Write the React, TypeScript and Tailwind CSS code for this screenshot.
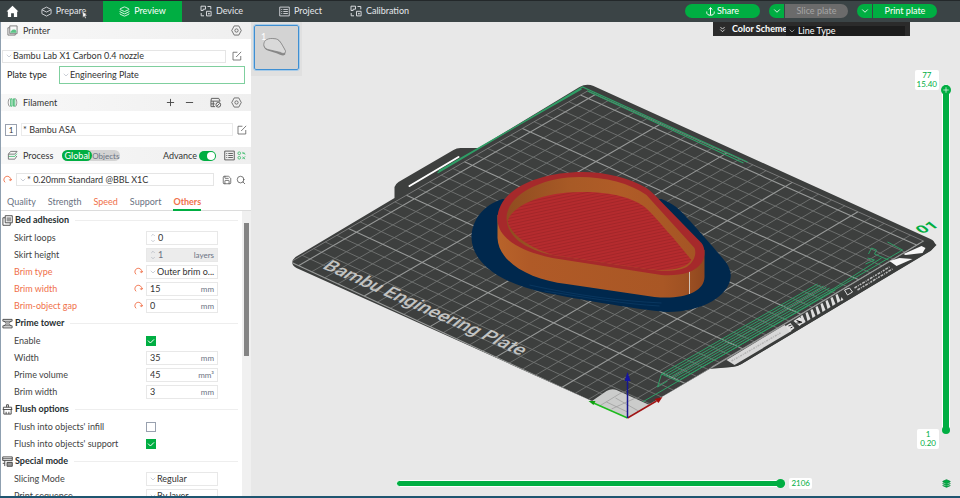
import { useState } from "react";
import type { ReactNode } from "react";
import { ChevronDown, ChevronUp, ChevronsDown, Layers, Minus, Plus, Save, Search } from "lucide-react";

interface Field {
  id: string;
  label: string;
  kind: "text" | "spin" | "select" | "check";
  value?: string;
  unit?: string;
  checked?: boolean;
  changed?: boolean;
  disabled?: boolean;
}

interface Section {
  title: string;
  icon: ReactNode;
  fields: Field[];
}

type Point = [number, number];

const adhesionIcon = (
  <svg viewBox="0 0 12 12" className="size-[11px]" fill="none" stroke="#444">
    <path d="M3.5 .8h7.7v7.7H3.5zM3.5 3H1v8.2h8V8.5" />
    <path d="M5 2.5h4.8v4.5H5z" fill="#999" stroke="none" />
  </svg>
);

const towerIcon = (
  <svg viewBox="0 0 12 12" className="size-[11px]" fill="none" stroke="#444">
    <path d="M1 1.5h10v2H1zM2.5 3.5 4.5 6l-2 2.5M9.5 3.5 7.5 6l2 2.5M1 8.5h10v2.3H1z" />
    <path d="M3.5 4h5L7 6l1.5 2h-5L5 6z" fill="#aaa" stroke="none" />
  </svg>
);

const flushIcon = (
  <svg viewBox="0 0 12 12" className="size-[11px]" fill="none" stroke="#444">
    <path d="M5 3.5V.8h2v2.7M1.5 6V3.5h9V6M.8 6h10.4M2 6v5h8V6M4.5 11V8.5M7.5 11V8.5" />
  </svg>
);

const modeIcon = (
  <svg viewBox="0 0 12 12" className="size-[11px]" fill="none" stroke="#444">
    <path d="M.8 1h10.4v4H.8zM.8 3h10.4M3 5v6M.8 8H3" />
    <path d="M5.5 7h5.7v4.2H5.5z" fill="#999" />
  </svg>
);

const sections: Section[] = [
  {
    title: "Bed adhesion",
    icon: adhesionIcon,
    fields: [
      { id: "skirt-loops", label: "Skirt loops", kind: "spin", value: "0" },
      { id: "skirt-height", label: "Skirt height", kind: "spin", value: "1", unit: "layers", disabled: true },
      { id: "brim-type", label: "Brim type", kind: "select", value: "Outer brim o...", changed: true },
      { id: "brim-width", label: "Brim width", kind: "text", value: "15", unit: "mm", changed: true },
      { id: "brim-gap", label: "Brim-object gap", kind: "text", value: "0", unit: "mm", changed: true },
    ],
  },
  {
    title: "Prime tower",
    icon: towerIcon,
    fields: [
      { id: "tower-enable", label: "Enable", kind: "check", checked: true },
      { id: "tower-width", label: "Width", kind: "text", value: "35", unit: "mm" },
      { id: "tower-volume", label: "Prime volume", kind: "text", value: "45", unit: "mm³" },
      { id: "tower-brim", label: "Brim width", kind: "text", value: "3", unit: "mm" },
    ],
  },
  {
    title: "Flush options",
    icon: flushIcon,
    fields: [
      { id: "flush-infill", label: "Flush into objects' infill", kind: "check", checked: false },
      { id: "flush-support", label: "Flush into objects' support", kind: "check", checked: true },
    ],
  },
  {
    title: "Special mode",
    icon: modeIcon,
    fields: [
      { id: "slicing-mode", label: "Slicing Mode", kind: "select", value: "Regular" },
      { id: "print-sequence", label: "Print sequence", kind: "select", value: "By layer" },
    ],
  },
];

function BoxIcon() {
  return (
    <svg viewBox="0 0 12 12" className="size-[11px]" fill="none" stroke="currentColor" strokeWidth=".9" strokeLinejoin="round">
      <path d="M6 1.2 11 3.8v4.6L6 11 1 8.4V3.8zM1.2 4.2 6 6.6l4.8-2.4" />
    </svg>
  );
}

function DeviceIcon() {
  return (
    <svg viewBox="0 0 12 12" className="size-[12px]" fill="none" stroke="currentColor" strokeWidth=".9">
      <path d="M1 5.5V1.2h4.5v3H3.2v1.3zM7.5 1.5h3.3v2.8M1.2 8v2.8H4M6.5 6.3h4.6v4.6H6.5zM8.5 8.3h.8v.8h-.8z" />
    </svg>
  );
}

function ProjectIcon() {
  return (
    <svg viewBox="0 0 12 12" className="size-[11px]" fill="none" stroke="currentColor" strokeWidth=".9">
      <path d="M.8 1.2h10.4v9.6H.8zM2.5 3.8h1M4.7 3.8h5M2.5 6h1M4.7 6h5M2.5 8.2h1M4.7 8.2h5" />
    </svg>
  );
}

function NutIcon() {
  return (
    <svg viewBox="0 0 12 12" className="size-[11px]" fill="none" stroke="#5c5c5c" strokeWidth=".9" strokeLinejoin="round">
      <path d="M3.5 1h5L11.2 6 8.5 11h-5L.8 6z" />
      <circle cx="6" cy="6" r="1.8" />
    </svg>
  );
}

function EditIcon() {
  return (
    <svg viewBox="0 0 12 12" className="size-[10px]" fill="none" stroke="#666">
      <path d="M6.5 1.5H1.2v9.3h9.3V6M5 7.2 11 1" />
    </svg>
  );
}

function ResetIcon() {
  return (
    <svg viewBox="0 0 12 12" className="size-[9px]" fill="none" stroke="#f0704a" strokeWidth="1.2">
      <path d="M2.8 9.8A4.6 4.6 0 1 1 10.3 7M11.8 5.2 10.2 7.6 7.8 6" />
    </svg>
  );
}

const tabs = [
  { name: "Prepare", icon: <BoxIcon /> },
  { name: "Preview", icon: <Layers className="size-[11px]" strokeWidth={1.8} /> },
  { name: "Device", icon: <DeviceIcon /> },
  { name: "Project", icon: <ProjectIcon /> },
  { name: "Calibration", icon: <DeviceIcon /> },
];

function TopBar() {
  const [active, setActive] = useState("Preview");
  return (
    <header className="relative z-10 flex h-[22px] shrink-0 items-stretch border-t border-[#23282a] bg-[#3b4446] text-white">
      <button aria-label="Home" className="flex w-6 items-center justify-center">
        <svg viewBox="0 0 14 14" className="size-[13px]" fill="currentColor">
          <path d="M7 .8 13.4 7H12v6H8.5V9h-3v4H2V7H.6z" />
        </svg>
      </button>
      <nav className="flex">
        {tabs.map((tab) => (
          <button
            key={tab.name}
            onClick={() => setActive(tab.name)}
            className={`flex w-[79px] items-center justify-center gap-1 pb-px ${tab.name === active ? "bg-[#00ae42]" : "text-gray-200"}`}
          >
            {tab.icon}
            {tab.name}
          </button>
        ))}
      </nav>
      <svg viewBox="0 0 8 12" className="absolute top-[9px] left-[82px] h-[10px] w-[6px]" fill="white" stroke="#333" strokeWidth=".6">
        <path d="M1 1v8.5l2-1.8 1.3 3 1.4-.6-1.3-3H7z" />
      </svg>
      <div className="ml-auto flex items-center gap-[9px] pr-[23px] pb-px">
        <button className="flex h-[14px] w-[75px] items-center justify-center gap-0.5 rounded-full bg-[#00ae42]">
          <svg viewBox="0 0 12 12" className="size-[9px]" fill="none" stroke="currentColor" strokeWidth="1.3">
            <path d="M6 10.500V1M3.400 3.400 6 1l2.600 2.400M1 6v1.500C1 9.500 3 11 6 11s5-1.500 5-3.500V6" />
          </svg>
          Share
        </button>
        <div className="flex h-[14px] gap-px">
          <button aria-label="Slice options" className="flex w-[15px] items-center justify-center rounded-l-full bg-[#00ae42]">
            <ChevronDown className="size-[10px]" />
          </button>
          <button disabled className="w-[63px] rounded-r-full bg-[#6b6b6b] text-[#a5a5a5]">Slice plate</button>
        </div>
        <div className="flex h-[14px] gap-px">
          <button aria-label="Print options" className="flex w-[15px] items-center justify-center rounded-l-full bg-[#00ae42]">
            <ChevronDown className="size-[10px]" />
          </button>
          <button className="w-16 rounded-r-full bg-[#00ae42]">Print plate</button>
        </div>
      </div>
    </header>
  );
}

function Combo({ id, label, value, className }: { id: string; label?: string; value: string; className: string }) {
  return (
    <div className={`flex items-center border bg-white pl-0.5 ${className}`}>
      <ChevronDown className="size-2 shrink-0 text-gray-400" strokeWidth={1.5} />
      <select id={id} aria-label={label} className="w-full min-w-0 appearance-none outline-none">
        <option>{value}</option>
      </select>
    </div>
  );
}

function FieldControl({ field }: { field: Field }) {
  if (field.kind === "check") {
    return (
      <span className="relative size-[10px]">
        <input
          id={field.id}
          type="checkbox"
          defaultChecked={field.checked}
          className="peer block size-[10px] appearance-none border border-gray-400 bg-white checked:border-[#00ae42] checked:bg-[#00ae42]"
        />
        <svg viewBox="0 0 10 10" className="pointer-events-none absolute inset-0 hidden size-[10px] peer-checked:block" fill="none" stroke="white">
          <path d="M2 4.6 4.4 7 8 3.4" />
        </svg>
      </span>
    );
  }
  if (field.kind === "select") {
    return <Combo id={field.id} value={field.value ?? ""} className="h-[14px] w-[72px] border-[#e8e8e8]" />;
  }
  return (
    <div className={`flex h-[14px] w-[72px] items-center border border-[#e8e8e8] px-[3px] ${field.disabled ? "bg-[#ececec] text-gray-500" : "bg-white"}`}>
      {field.kind === "spin" && (
        <span className="mr-0.5 flex flex-col text-gray-400">
          <ChevronUp className="size-[6px]" />
          <ChevronDown className="size-[6px]" />
        </span>
      )}
      <input id={field.id} defaultValue={field.value} disabled={field.disabled} className="w-0 min-w-0 flex-1 outline-none" />
      {field.unit && <span className="text-[8px] text-gray-500">{field.unit}</span>}
    </div>
  );
}

function PanelHeader({ icon, title, children }: { icon: ReactNode; title: string; children?: ReactNode }) {
  return (
    <div className="flex h-[17px] items-center bg-gradient-to-r from-[#f8f8f8] to-[#efefef] pr-[9px] pl-1.5">
      <span className="flex w-4 shrink-0">{icon}</span>
      <h2>{title}</h2>
      {children}
    </div>
  );
}

function Sidebar() {
  const [tab, setTab] = useState("Others");
  return (
    <aside className="flex w-[251px] shrink-0 flex-col border-l border-[#8fa0b0] bg-white text-[#333]">
      <PanelHeader
        title="Printer"
        icon={
          <svg viewBox="0 0 12 12" className="size-[11px]" fill="none" stroke="#777">
            <path d="M3 1h8v8.5H3zM3 3H1v8h8V9.5" />
            <path d="m4 8 2-2.5h3L10 8z" fill="#5cc487" stroke="#5cc487" />
          </svg>
        }
      >
        <button aria-label="Printer settings" className="ml-auto"><NutIcon /></button>
      </PanelHeader>

      <div className="mt-[10px] flex h-[14px] items-center gap-1.5 pr-[9px] pl-[1px]">
        <Combo id="printer" label="Printer" value="Bambu Lab X1 Carbon 0.4 nozzle" className="h-[13px] flex-1 border-[#e5e5e5]" />
        <button aria-label="Edit printer"><EditIcon /></button>
      </div>
      <div className="mt-[3px] flex items-center pr-1.5 pl-1.5">
        <label htmlFor="plate" className="w-[52px] text-[#222]">Plate type</label>
        <Combo id="plate" value="Engineering Plate" className="h-[18px] flex-1 border-[#7fcf9e]" />
      </div>

      <div className="mt-2.5">
        <PanelHeader
          title="Filament"
          icon={
            <svg viewBox="0 0 12 12" className="size-[11px]" fill="none" stroke="#888">
              <path d="M3 1.5C.8 3 .8 9 3 10.5M9 1.5c2.200 1.500 2.200 7.500 0 9" />
              <path d="M4 2h1.500v8H4zM7 2h1.500v8H7z" stroke="#3fba6e" />
            </svg>
          }
        >
          <div className="ml-auto flex items-center text-[#444]">
            <button aria-label="Add filament" className="mr-2"><Plus className="size-[11px]" /></button>
            <button aria-label="Remove filament" className="mr-[15px]"><Minus className="size-[11px]" /></button>
            <button aria-label="Sync filament" className="mr-[9px]">
              <svg viewBox="0 0 13 12" className="h-[11px] w-[12px]" fill="none" stroke="#555">
                <path d="M1.500 1.500h8l1.500 3H1zM1 4.500v6h4.500M3.500 4.500v6M1 7.500h4" />
                <circle cx="9" cy="8.500" r="2.600" />
                <path d="m7.500 10 3-3" />
              </svg>
            </button>
            <button aria-label="Filament settings"><NutIcon /></button>
          </div>
        </PanelHeader>
      </div>
      <div className="mt-3 flex items-center pr-1 pl-1">
        <span className="flex size-[12px] items-center justify-center border border-gray-400 text-[8px]">1</span>
        <input aria-label="Filament" defaultValue="* Bambu ASA" className="mr-1 ml-1 h-[13px] min-w-0 flex-1 border border-[#ebebeb] pl-[1px]" />
        <button aria-label="Edit filament"><EditIcon /></button>
      </div>

      <div className="mt-[11px]">
        <PanelHeader
          title="Process"
          icon={
            <svg viewBox="0 0 12 12" className="size-[11px]" fill="none" stroke="#666" strokeWidth=".9">
              <path d="M4 1.500h7L8.500 4.500h-7z" />
              <path d="M10.800 4 8.500 7h-7" stroke="#3fba6e" />
              <path d="M10.800 6.500 8.500 10h-7V4.500" />
            </svg>
          }
        >
          <div className="ml-[9px] flex h-[11px] items-center rounded-full bg-[#d3d3d3]">
            <button className="flex h-full w-[30px] items-center justify-center rounded-full bg-[#00ae42] text-white">Global</button>
            <button className="w-[28px] pr-px text-[8px] text-gray-500">Objects</button>
          </div>
          <label className="ml-auto flex items-center gap-[2px]">
            Advance
            <input
              type="checkbox"
              role="switch"
              defaultChecked
              className="relative h-[10px] w-[17px] appearance-none rounded-full bg-[#00ae42] after:absolute after:top-[1px] after:right-[1px] after:size-2 after:rounded-full after:bg-white"
            />
          </label>
          <button aria-label="Parameter list" className="ml-2 text-[#444]"><ProjectIcon /></button>
          <button aria-label="Compare presets" className="-mr-1 ml-[2px]">
            <svg viewBox="0 0 10 10" className="size-[9px]" fill="none" stroke="#45bd72">
              <circle cx="2.500" cy="2.500" r="1.500" />
              <circle cx="2.500" cy="7.500" r="1.500" />
              <path d="M6 2.500h3M6 1l3 3M6 6.500l3 2.500M9 6 6 9" />
            </svg>
          </button>
        </PanelHeader>
      </div>
      <div className="mt-[9px] flex items-center pr-[5px] pl-0.5">
        <button aria-label="Reset preset" className="mr-1"><ResetIcon /></button>
        <Combo id="preset" label="Process preset" value="* 0.20mm Standard @BBL X1C" className="h-[13px] flex-1 border-[#e5e5e5]" />
        <button aria-label="Save preset" className="ml-2"><Save className="size-[10px] text-[#444]" strokeWidth={1.7} /></button>
        <button aria-label="Search settings" className="ml-1"><Search className="size-[10px] text-[#444]" strokeWidth={1.7} /></button>
      </div>

      <div className="mt-[9px] flex h-4 items-stretch gap-3 border-b border-[#dcdcdc] pl-1.5 text-gray-500">
        {["Quality", "Strength", "Speed", "Support", "Others"].map((name) => (
          <button
            key={name}
            onClick={() => setTab(name)}
            className={`-mb-px border-b-2 ${name === tab ? "border-[#00ae42] font-bold text-[#f0704a]" : name === "Speed" ? "border-transparent text-[#f0704a]" : "border-transparent"}`}
          >
            {name}
          </button>
        ))}
      </div>

      <div className="flex min-h-0 flex-1">
        <div className="min-w-0 flex-1 overflow-hidden pr-1">
          {sections.map((section) => (
            <section key={section.title}>
              <div className="flex h-[18px] items-center gap-[2px] pl-[1px]">
                {section.icon}
                <h3 className="font-bold text-[#262e30]">{section.title}</h3>
                <span className="ml-1 h-px flex-1 bg-[#eee]" />
              </div>
              {section.fields.map((field) => (
                <div key={field.id} className="flex h-[17px] items-center pl-[13px]">
                  <label htmlFor={field.id} className={`w-[120px] ${field.changed ? "text-[#f0704a]" : "text-[#444]"}`}>{field.label}</label>
                  <span className="flex w-3 shrink-0">{field.changed && <button aria-label={`Reset ${field.label}`}><ResetIcon /></button>}</span>
                  <FieldControl field={field} />
                </div>
              ))}
            </section>
          ))}
        </div>
        <div className="w-[9px] bg-[#f0f0f0] pt-[12px] pl-[2px]">
          <div className="h-[133px] w-[5px] bg-[#848484]" />
        </div>
      </div>
    </aside>
  );
}

// bed corners on screen: origin, +x, far, +y
const bed: Point[] = [[628, 418], [924, 241], [588, 91], [291, 262]];

// maps bed millimetres to the screen
function project(mmX: number, mmY: number): string {
  const u = mmX / 256;
  const v = mmY / 256;
  const [a, b, c, d] = bed;
  const x = a[0] * (1 - u) * (1 - v) + b[0] * u * (1 - v) + c[0] * u * v + d[0] * (1 - u) * v;
  const y = a[1] * (1 - u) * (1 - v) + b[1] * u * (1 - v) + c[1] * u * v + d[1] * (1 - u) * v;
  return `${x.toFixed(1)} ${y.toFixed(1)}`;
}

function gridPath(major: boolean) {
  let d = "";
  for (let mm = 0; mm <= 250; mm += 10) {
    if ((mm % 50 === 0) !== major) continue;
    d += `M${project(mm, 0)}L${project(mm, 256)}M${project(0, mm)}L${project(256, mm)}`;
  }
  return d;
}

const plate = "M628 417 L297 268Q289 263 296 257L395 198V187Q396 184 399 182L454 150Q457 148 461 148H479L580 87Q587 83 594 86L931 239Q939 243 932 250L742 364Q737 367 732 367L710 369Z";
const floor = "M508 221C514 204 546 192 580 192C610 191 633 198 644 206C652 212 660 223 673 237L692 260C687 268 672 272 647 269L553 255C537 250 512 238 508 221Z";
const purgeLines = [0, 1, 2, 3, 4, 5, 6];
const stripes = [0, 1, 2, 3, 4, 5, 6, 7];

function PlateView() {
  return (
    <svg viewBox="252 22 708 474" className="absolute inset-0 h-full w-full">
      <defs>
        <clipPath id="bed-clip"><path d={plate} /></clipPath>
        <linearGradient id="wall" x1="498" x2="705" y1="0" y2="0" gradientUnits="userSpaceOnUse">
          <stop offset="0" stopColor="#b8632a" />
          <stop offset=".15" stopColor="#b05a27" />
          <stop offset=".8" stopColor="#a95725" />
          <stop offset=".9" stopColor="#a05223" />
          <stop offset="1" stopColor="#8f471f" />
        </linearGradient>
        <linearGradient id="inner-wall" x1="505" x2="695" y1="0" y2="0" gradientUnits="userSpaceOnUse">
          <stop offset="0" stopColor="#8f4c20" />
          <stop offset=".35" stopColor="#a85a26" />
          <stop offset=".6" stopColor="#b05c27" />
          <stop offset="1" stopColor="#a55524" />
        </linearGradient>
        <pattern id="infill" width="4" height="3" patternUnits="userSpaceOnUse" patternTransform="rotate(-12)">
          <path d="M0 0h4v3H0z" fill="#b52b2e" />
          <path d="M0 1.5h4" stroke="#a32629" />
        </pattern>
      </defs>

      <path d={plate} fill="#3d3f3e" />
      <g clipPath="url(#bed-clip)" fill="none">
        <path d={gridPath(false)} stroke="#727473" strokeWidth=".9" />
        <path d={gridPath(true)} stroke="#979998" strokeWidth="1.1" />
        <path d={`M${project(256, 0)}L${project(256, 256)}L${project(0, 256)}`} stroke="#888" strokeWidth=".8" />
      </g>
      <path d="M410 186 459 157" stroke="white" strokeWidth="2" strokeLinecap="round" />

      {/* handle side with the print labels */}
      <path d="M712 368 731 366 790 330 830 302 922 243 933 241 937 245 931 251 742 364Q737 367 732 367Z" fill="#3a3c3b" />
      <path d="M712 367 921 243" stroke="#9b9d9c" strokeWidth=".7" />
      <path d="M727 360 785 325 792 331 735 365Z" fill="#d8d8d8" />
      <path d="M732 361 781 333" stroke="#b4b4b4" strokeWidth="1.5" strokeDasharray="2 1 1 1" />
      <path d="M786 326l5-3 4 5-5 4zM794 321l6-4 6 4-6 5z" fill="#e2e2e2" />
      <path d="M789 326l3-1M791 328l2-1M797 320l3 3 3-1M797 323h3" stroke="#333" />
      {stripes.map((i) => (
        <path key={i} d={`M${801 + i * 5} ${316 - i * 3}l2-1 3 7-3 2z`} fill="#dedede" />
      ))}
      <path d="M842 297l2 3-3 1z" fill="#dedede" />
      <path d="M845 290l5-2 3 4-5 3z" fill="none" stroke="#dedede" />
      <path d="M855 288 890 267M858 290 893 269" stroke="#bbb" strokeWidth="1.5" strokeDasharray="3 1 1 1 2 1" />
      <path d="M890 261 900 258 913 259 897 266ZM904 254 922 246 926 248 923 253 906 255Z" fill="#f6f6f6" />

      <text transform="matrix(.93 .41 -.74 .64 322 268)" fill="#c2c3c2" fontSize="19" fontWeight="500" fontFamily="Roboto, sans-serif">
        Bambu Engineering Plate
      </text>
      <text transform="matrix(.94 -.39 .65 .5 922 234)" fill="#00ae42" fontSize="17" fontWeight="700" fontFamily="Roboto, sans-serif">
        01
      </text>

      {/* travel moves */}
      <g fill="none" stroke="#2f9e66">
        <path d="M438 173 583 87 748 162M439 171 582 89M588 91 744 163" strokeWidth="1.2" />
        {purgeLines.map((i) => (
          <path key={i} d={`M${662 + i * 3} ${374 + i}L${818 + i * 3} ${284 + i}`} />
        ))}
        <path d="M643 402 903 250 888 242M658 387 662 374 680 382M658 387 668 381M832 290 882 258M866 264 875 260 868 258M869 254 872 248 877 250 875 254 889 260" />
      </g>

      {/* brim and model */}
      <path d="M472 238C472 220 484 205 503 199L662 199C670 202 676 206 680 210C690 220 715 248 727 263C730 268 732 273 731 278C729 295 704 312 668 312C650 311 600 303 547 293C498 283 473 262 472 238Z" fill="#00284d" />
      <path d="M545 291C590 298 625 304 660 306M530 285C580 296 622 301 662 303" fill="none" stroke="#0b3a63" strokeWidth=".8" />
      <path d="M498 215V238C499 262 530 280 567 284L655 297C683 300 705 292 705 277V250Z" fill="url(#wall)" />
      <path d="M690 271V294" stroke="#d9cfc8" strokeWidth=".9" />
      <path d="M498 219C498 190 538 172 583 172C606 172 630 178 647 188C653 192 657 197 662 202L702 243C706 248 706 257 702 263C695 273 680 276 662 275L553 258C525 252 498 240 498 219Z" fill="#a6292b" />
      <path d="M507 218C508 193 545 177 580 177C606 177 630 183 647 195L695 248C698 256 692 264 687 267C680 271 665 272 647 269L553 255C530 250 508 240 507 218Z" fill="url(#inner-wall)" />
      <path d={floor} fill="url(#infill)" />

      {/* excluded corner */}
      <path d="M591 402 607 391Q612 388 617 390L650 405 628 418Z" fill="#cbcccb" />
      <path d="M600 406 623 392M616 398 639 411M607 402 628 412M612 409 636 398" stroke="#999" strokeWidth=".7" />
      <path d="M628 418 594 403" stroke="#1dbb1d" strokeWidth="1.5" />
      <path d="M589 401 596 401 594 405Z" fill="#10a010" />
      <path d="M628 418 657 401" stroke="#a01515" strokeWidth="1.5" />
      <path d="M663 397 655 399 659 403Z" fill="#a00d0d" />
      <path d="M628 418V379" stroke="#161690" strokeWidth="1.5" />
      <path d="M628 372 625 381H631Z" fill="#1515a0" />
    </svg>
  );
}

function LayerLabel({ layer, height, className }: { layer: string; height: string; className: string }) {
  return (
    <div className={`absolute right-[21px] flex flex-col items-center rounded-[2px] bg-white text-[8px] leading-[9px] text-[#00ae42] ${className}`}>
      <span>{layer}</span>
      <span>{height}</span>
    </div>
  );
}

function Viewport() {
  return (
    <main className="relative min-w-0 flex-1 overflow-hidden bg-[#e8e8e8]">
      <PlateView />

      <div className="absolute top-0 left-0 h-[54px] w-[51px] bg-[#e0e0e0] pt-[3px] pl-[3px]">
        <button aria-label="Plate 1" className="relative block size-[45px] rounded-[2px] border border-[#3f8fd2] bg-[#d3d3d3] outline outline-[#a7cbe8]">
          <span className="absolute top-1.5 left-[6px] leading-none text-white">1</span>
          <svg viewBox="0 0 44 44" className="size-full">
            <path d="M9 20C9 15 14 12 21 13C26 14 27 18 31 25V29C30 31 26 30 22 28L13 25C10 24 9 22 9 20Z" fill="#888" />
            <path d="M9 19C9 14 14 12 20 13C25 13 27 18 31 25C32 28 29 29 26 27L13 24C10 23 9 21 9 19Z" fill="#d9d9d9" stroke="#777" strokeWidth=".7" />
          </svg>
        </button>
      </div>

      <div className="absolute top-0 right-[50px] flex h-[14px] w-[197px] items-center bg-[#2b2b2b] pr-[5px] pl-[5px] text-white">
        <ChevronsDown className="size-[9px] shrink-0" />
        <label htmlFor="scheme" className="ml-[5px] w-[54px] shrink-0 font-bold whitespace-nowrap">Color Scheme</label>
        <div className="mt-1 flex h-[10px] min-w-0 flex-1 items-center bg-[#1c1c1c] pl-0.5">
          <ChevronDown className="size-2 shrink-0" strokeWidth={1.5} />
          <select id="scheme" className="ml-0.5 w-full min-w-0 appearance-none bg-[#1c1c1c] leading-[10px]">
            <option>Line Type</option>
          </select>
        </div>
      </div>

      <LayerLabel layer="77" height="15.40" className="top-[48px] px-[2px] py-px" />
      <div className="absolute top-[62px] right-[9px] h-[350px] w-[10px]">
        <input
          type="range"
          aria-label="Top layer"
          min={1}
          max={77}
          defaultValue={77}
          className="absolute inset-y-0 left-px h-full w-2 appearance-none rounded-full border border-white bg-[#00ae42] [direction:rtl] [writing-mode:vertical-lr] [&::-webkit-slider-thumb]:size-[10px] [&::-webkit-slider-thumb]:appearance-none [&::-webkit-slider-thumb]:rounded-full [&::-webkit-slider-thumb]:bg-[#00ae42]"
        />
        <input
          type="range"
          aria-label="Bottom layer"
          min={1}
          max={77}
          defaultValue={1}
          className="pointer-events-none absolute inset-y-0 left-px h-full w-2 appearance-none bg-transparent [direction:rtl] [writing-mode:vertical-lr] [&::-webkit-slider-thumb]:size-2 [&::-webkit-slider-thumb]:appearance-none [&::-webkit-slider-thumb]:rounded-full [&::-webkit-slider-thumb]:bg-[#00ae42]"
        />
        <Plus className="pointer-events-none absolute top-[2px] left-px size-2 text-white" />
      </div>
      <LayerLabel layer="1" height="0.20" className="bottom-[47px] px-[3px] py-px" />

      <div className="absolute right-[148px] bottom-[7px] left-[145px] flex items-center gap-[3px]">
        <input
          type="range"
          aria-label="Move"
          min={0}
          max={2106}
          defaultValue={2106}
          className="h-[7px] min-w-0 flex-1 appearance-none rounded-full border border-white bg-[#00ae42] [&::-webkit-slider-thumb]:size-[9px] [&::-webkit-slider-thumb]:appearance-none [&::-webkit-slider-thumb]:rounded-full [&::-webkit-slider-thumb]:bg-[#00ae42]"
        />
        <output className="rounded-[2px] bg-white px-[2px] text-[8px] leading-[11px] text-[#00ae42]">2106</output>
      </div>
      <button aria-label="Layer view" className="absolute right-[9px] bottom-2">
        <Layers className="size-[9px] fill-[#00ae42] text-[#00883a]" />
      </button>
    </main>
  );
}

export default function App() {
  return (
    <div className="flex h-screen flex-col overflow-hidden border-b-2 border-[#1f5570] bg-white font-[Lato,sans-serif] text-[9px] leading-3">
      <TopBar />
      <div className="flex min-h-0 flex-1">
        <Sidebar />
        <Viewport />
      </div>
    </div>
  );
}
